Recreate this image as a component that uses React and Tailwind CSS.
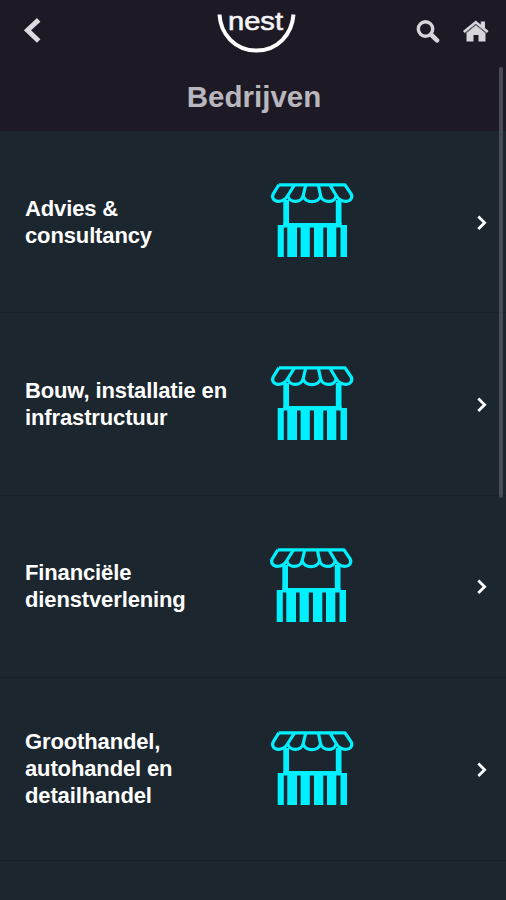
import React from 'react';

const CATEGORIES = [
  { id: 'advies', label: 'Advies & consultancy' },
  { id: 'bouw', label: 'Bouw, installatie en infrastructuur' },
  { id: 'financieel', label: 'Financiële dienstverlening', iconClass: '-ml-[1.5px] mr-[1.5px]' },
  { id: 'groothandel', label: 'Groothandel, autohandel en detailhandel' },
];

const NestLogo = () => (
  <svg width="84" height="56" viewBox="214 0 84 56" className="block" aria-label="nest">
    <path d="M219.5 14.5C220.5 34 235 50.5 256.5 50.5S292 34 293.5 14.5" fill="none" stroke="#ffffff" strokeWidth="4" />
    <text
      x="228"
      y="30.3"
      textLength="55"
      lengthAdjust="spacingAndGlyphs"
      fill="#f4f4f6"
      stroke="#f4f4f6"
      strokeWidth="0.6"
      className="font-['Liberation_Sans',Arial,sans-serif] text-[26px]"
    >
      nest
    </text>
  </svg>
);

const BackIcon = () => (
  <svg width="24" height="30" viewBox="20 15 24 30" className="block">
    <path d="M38.7 19.8L27.5 30.2L38.7 41" fill="none" stroke="#dcdce0" strokeWidth="5" />
  </svg>
);

const SearchIcon = () => (
  <svg width="26" height="28" viewBox="414 17 26 28" className="block">
    <circle cx="425.5" cy="29" r="7.2" fill="none" stroke="#d6d6da" strokeWidth="3.4" />
    <path d="M431 34.5L437 40.3" fill="none" stroke="#d6d6da" strokeWidth="4.6" strokeLinecap="round" />
  </svg>
);

const HomeIcon = () => (
  <svg width="28" height="28" viewBox="462 17 28 28" className="block">
    <path d="M466.5 33L476 25L485.5 33V41.5H478.5V35H473.5V41.5H466.5Z" fill="#d6d6da" />
    <path d="M463.8 32L475.8 22.2L487.8 32" fill="none" stroke="#d6d6da" strokeWidth="2.6" />
    <path d="M480.8 21.5H485V30L480.8 26.5Z" fill="#d6d6da" />
    <path d="M465.5 33.2L475.8 24.9L486.1 33.2" fill="none" stroke="#77767e" strokeWidth="0.9" />
  </svg>
);

const StallIcon = () => (
  <svg width="90" height="80" viewBox="6 10 90 80" className="block">
    {/* Awning */}
    <g fill="none" stroke="#00f0ff" strokeWidth="3.2" strokeLinejoin="round">
      <path d="M18.8 14.8H85L91.2 24C93 28 90.3 31.3 86 31.3C81.5 31.3 78.5 29.5 76.5 26L69.8 14.8" />
      <path d="M18.8 14.8L13.2 24C11.4 28 14 31.3 18.2 31.3C22.8 31.3 25.5 29.5 27.5 26L34.5 14.8" />
      <path d="M28 26C29 33.2 41.5 33.2 43.2 25.5L45.8 14.8" />
      <path d="M43.2 25.5C44.5 33.6 59.3 33.6 60.6 25.5" />
      <path d="M76 26C75 33.2 62.3 33.2 60.6 25.5L58.3 14.8" />
    </g>
    {/* Posts */}
    <path d="M23.3 30H29V56H23.3ZM75.8 30H81.5V56H75.8Z" fill="#00f0ff" />
    {/* Counter */}
    <path
      d="M17.7 55H23.5V53H81.5V55H87V87H80.5V57.5H76.3V87H67V57.5H63.3V87H54V57.5H49.8V87H40.6V57.5H37V87H27.3V57.5H23.8V87H17.7Z"
      fill="#00f0ff"
    />
  </svg>
);

const ChevronIcon = () => (
  <svg width="16" height="20" viewBox="474 213 16 20" className="block">
    <path d="M478.3 216.5L484.6 222.8L478.3 229" fill="none" stroke="#ffffff" strokeWidth="2.8" />
  </svg>
);

const CategoryRow = ({ label, iconClass = '' }) => (
  <li className="h-[182.4px] shrink-0 border-b border-[#162028]">
    <button type="button" className="flex h-full w-full items-center pl-[25px] pr-4 text-left">
      <span className="w-[241px] pr-8 text-[22px] leading-[27px] font-bold tracking-[-0.13px] text-white">
        {label}
      </span>
      <span className={`-mt-[2.5px] ${iconClass}`}>
        <StallIcon />
      </span>
      <span className="ml-auto mt-0.5">
        <ChevronIcon />
      </span>
    </button>
  </li>
);

const App = () => {
  return (
    <div className="relative flex h-[900px] w-full flex-col overflow-hidden bg-[#1c262e] font-['Liberation_Sans',Arial,sans-serif]">
      <header className="h-[131px] shrink-0 bg-[#1d1a26]">
        <div className="grid grid-cols-3 items-start">
          <button type="button" className="justify-self-start pt-[15px] pl-5" aria-label="Terug">
            <BackIcon />
          </button>
          <div className="justify-self-center pl-[6px]">
            <NestLogo />
          </div>
          <div className="flex gap-[22px] justify-self-end pt-[17px] pr-4">
            <SearchIcon />
            <HomeIcon />
          </div>
        </div>
        <h1 className="mt-[22px] pl-0.5 text-center text-[29.5px] leading-[37px] font-bold text-[#b9b7bd]">Bedrijven</h1>
      </header>

      <ul className="flex flex-col">
        {CATEGORIES.map((category) => (
          <CategoryRow key={category.id} label={category.label} iconClass={category.iconClass} />
        ))}
      </ul>

      {/* Scroll indicator */}
      <div className="absolute top-[67px] right-[3.5px] h-[431px] w-1 rounded-full bg-[#494c54]" />
    </div>
  );
};

export default App;
